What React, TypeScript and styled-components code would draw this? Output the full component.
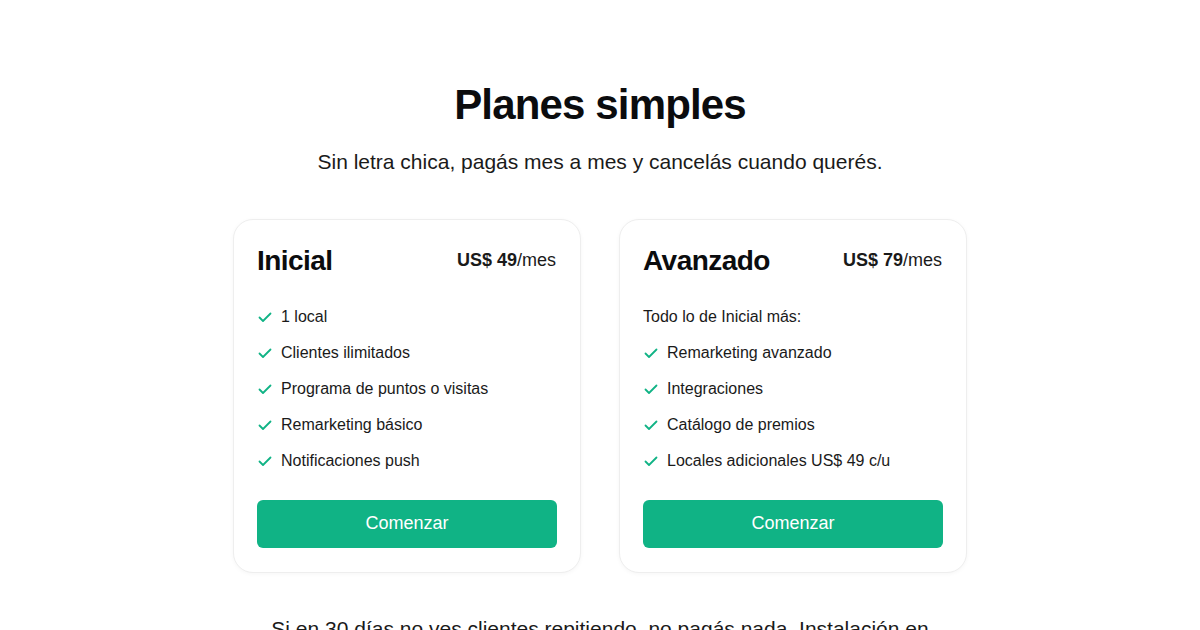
import React from "react";
import styled, { createGlobalStyle } from "styled-components";

const GlobalStyle = createGlobalStyle`
  body {
    margin: 0;
    background: #ffffff;
    font-family: "Liberation Sans", Arial, sans-serif;
    color: #111111;
  }
`;

const Section = styled.section`
  display: flex;
  flex-direction: column;
  align-items: center;
  padding: 80px 24px 40px;
`;

const Title = styled.h1`
  margin: 0;
  font-size: 42px;
  line-height: 1.2;
  font-weight: 700;
  letter-spacing: -0.02em;
  color: #0b0c0e;
`;

const Subtitle = styled.p`
  margin: 16px 0 0;
  font-size: 21px;
  line-height: 1.5;
  color: #1a1a1a;
`;

const Grid = styled.div`
  display: grid;
  grid-template-columns: repeat(2, 348px);
  gap: 38px;
  margin-top: 41px;
`;

const Card = styled.div`
  display: flex;
  flex-direction: column;
  padding: 24px 23px;
  border: 1px solid #eeeeee;
  border-radius: 20px;
  background: #fff;
  box-shadow: 0 1px 4px rgba(0, 0, 0, 0.04);
`;

const CardHeader = styled.div`
  display: flex;
  justify-content: space-between;
  align-items: center;
  height: 34px;
`;

const PlanName = styled.h2`
  margin: 0;
  font-size: 28px;
  font-weight: 700;
  letter-spacing: -0.02em;
  color: #0b0c0e;
`;

const Price = styled.span`
  font-size: 18px;
  color: #1a1a1a;
  margin-right: 1px;
  b {
    font-weight: 700;
  }
`;

const List = styled.ul`
  list-style: none;
  margin: 27px 0 0;
  padding: 0;
  display: flex;
  flex-direction: column;
  gap: 12px;
`;

const Item = styled.li`
  display: flex;
  align-items: center;
  gap: 9px;
  font-size: 16px;
  line-height: 24px;
  color: #1a1a1a;
`;

const Check = styled.svg`
  width: 14px;
  height: 14px;
  flex-shrink: 0;
  margin-left: 1px;
`;

const Button = styled.button`
  margin-top: 27px;
  height: 48px;
  border: none;
  border-radius: 6px;
  background: #10b385;
  color: #ffffff;
  font-family: inherit;
  font-size: 18px;
  cursor: pointer;
`;

const Note = styled.p`
  margin: 40px 0 0;
  max-width: 672px;
  text-align: center;
  font-size: 21px;
  line-height: 1.5;
  color: #1a1a1a;
`;

const CheckIcon = () => (
  <Check viewBox="0 0 14 14" fill="none" stroke="#10b385" strokeWidth="1.8" strokeLinecap="round" strokeLinejoin="round">
    <path d="M1.5 7.5L5 11L12.5 3.5" />
  </Check>
);

type Plan = {
  name: string;
  price: string;
  intro?: string;
  features: string[];
};

const plans: Plan[] = [
  {
    name: "Inicial",
    price: "US$ 49",
    features: [
      "1 local",
      "Clientes ilimitados",
      "Programa de puntos o visitas",
      "Remarketing básico",
      "Notificaciones push",
    ],
  },
  {
    name: "Avanzado",
    price: "US$ 79",
    intro: "Todo lo de Inicial más:",
    features: [
      "Remarketing avanzado",
      "Integraciones",
      "Catálogo de premios",
      "Locales adicionales US$ 49 c/u",
    ],
  },
];

export default function App() {
  return (
    <>
      <GlobalStyle />
      <Section>
        <Title>Planes simples</Title>
        <Subtitle>Sin letra chica, pagás mes a mes y cancelás cuando querés.</Subtitle>
        <Grid>
          {plans.map((plan) => (
            <Card key={plan.name}>
              <CardHeader>
                <PlanName>{plan.name}</PlanName>
                <Price>
                  <b>{plan.price}</b>/mes
                </Price>
              </CardHeader>
              <List>
                {plan.intro && <Item>{plan.intro}</Item>}
                {plan.features.map((f) => (
                  <Item key={f}>
                    <CheckIcon />
                    {f}
                  </Item>
                ))}
              </List>
              <Button>Comenzar</Button>
            </Card>
          ))}
        </Grid>
        <Note>
          Si en 30 días no ves clientes repitiendo, no pagás nada. Instalación en 24 horas.
        </Note>
      </Section>
    </>
  );
}
